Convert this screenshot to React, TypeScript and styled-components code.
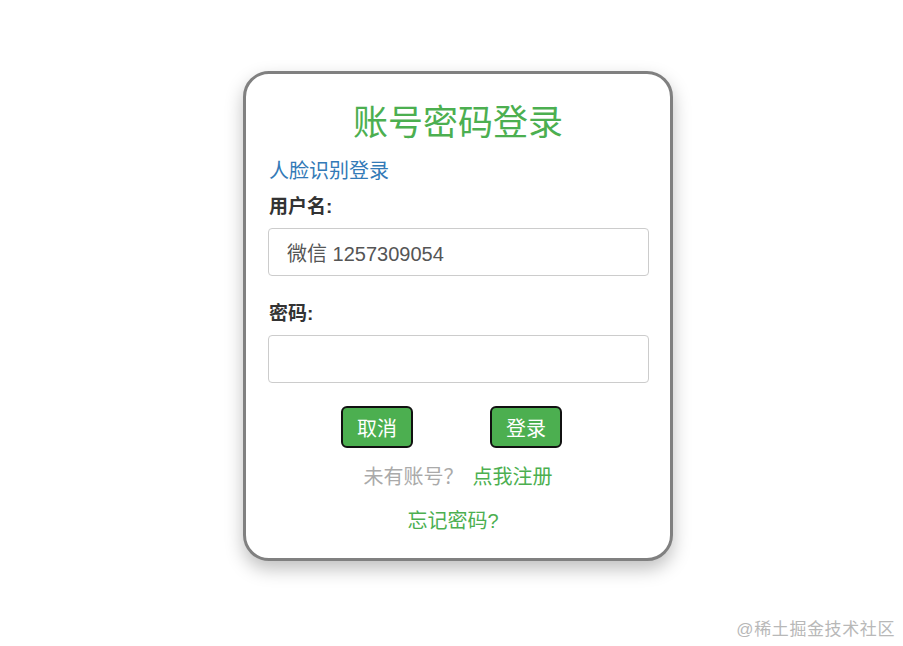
import React from 'react';
import styled, { createGlobalStyle } from 'styled-components';

const GlobalStyle = createGlobalStyle`
  html, body {
    margin: 0;
    padding: 0;
    background: #ffffff;
  }
  body {
    font-family: "Liberation Sans", "Noto Sans CJK SC", sans-serif;
    width: 903px;
    height: 646px;
    overflow: hidden;
  }
  * {
    box-sizing: border-box;
  }
`;

const Page = styled.div`
  position: relative;
  width: 903px;
  height: 646px;
  display: flex;
  justify-content: center;
  align-items: flex-start;
  padding: 71px 0 0 13px;
`;

const Card = styled.form`
  width: 430px;
  height: 490px;
  border: 3px solid #808080;
  border-radius: 26px;
  background: #fff;
  box-shadow: 0 8px 18px rgba(0, 0, 0, 0.25);
  padding: 24px 22px 0 22px;
  display: flex;
  flex-direction: column;
`;

const Title = styled.h2`
  margin: 0;
  text-align: center;
  color: #4caf50;
  font-size: 35px;
  font-weight: 400;
  line-height: 50px;
`;

const FaceLink = styled.a`
  display: block;
  margin: 10px 0 0 1px;
  color: #337ab7;
  font-size: 20px;
  line-height: 26px;
  text-decoration: none;
`;

const Field = styled.div`
  display: flex;
  flex-direction: column;
  margin-top: ${(p: { top: number }) => p.top}px;
`;

const Label = styled.label`
  color: #333;
  font-size: 19px;
  font-weight: 700;
  line-height: 24px;
  margin: 0 0 9px 1px;
`;

const Input = styled.input`
  width: 381px;
  height: 48px;
  border: 1px solid #ccc;
  border-radius: 4px;
  padding: 0 18px;
  font-family: "Liberation Sans", "Noto Sans CJK SC", sans-serif;
  font-size: 20px;
  color: #555;
  outline: none;
`;

const ButtonRow = styled.div`
  display: flex;
  justify-content: center;
  gap: 77px;
  margin-top: 23px;
  padding-right: 13px;
`;

const GreenButton = styled.button`
  width: 72px;
  height: 42px;
  background: #4caf50;
  color: #fff;
  border: 2px solid #111;
  border-radius: 6px;
  font-family: "Liberation Sans", "Noto Sans CJK SC", sans-serif;
  font-size: 20px;
  padding: 0;
  cursor: pointer;
`;

const RegisterLine = styled.p`
  margin: 17px 0 0 0;
  text-align: center;
  font-size: 20px;
  line-height: 24px;
  color: #aaa;
`;

const GreenLink = styled.a`
  color: #4caf50;
  text-decoration: none;
  font-size: 20px;
  margin-left: ${(p: { gap?: number }) => p.gap ?? 0}px;
`;

const ForgotLine = styled.p`
  margin: 20px 0 0 0;
  padding-right: 10px;
  text-align: center;
  font-size: 20px;
  line-height: 24px;
`;

const Watermark = styled.span`
  position: absolute;
  right: 8px;
  bottom: 6px;
  color: #b8b8b8;
  font-size: 17px;
  letter-spacing: 0.6px;
  font-family: "Liberation Sans", "Noto Sans CJK SC", sans-serif;
`;

const App = () => {
  return (
    <>
      <GlobalStyle />
      <Page>
        <Card onSubmit={(e) => e.preventDefault()}>
          <Title>账号密码登录</Title>
          <FaceLink href="#">人脸识别登录</FaceLink>
          <Field top={11}>
            <Label>用户名:</Label>
            <Input defaultValue="微信 1257309054" />
          </Field>
          <Field top={26}>
            <Label>密码:</Label>
            <Input type="password" />
          </Field>
          <ButtonRow>
            <GreenButton type="button">取消</GreenButton>
            <GreenButton type="submit">登录</GreenButton>
          </ButtonRow>
          <RegisterLine>
            未有账号？
            <GreenLink href="#" gap={9}>
              点我注册
            </GreenLink>
          </RegisterLine>
          <ForgotLine>
            <GreenLink href="#">忘记密码?</GreenLink>
          </ForgotLine>
        </Card>
        <Watermark>@稀土掘金技术社区</Watermark>
      </Page>
    </>
  );
};

export default App;
